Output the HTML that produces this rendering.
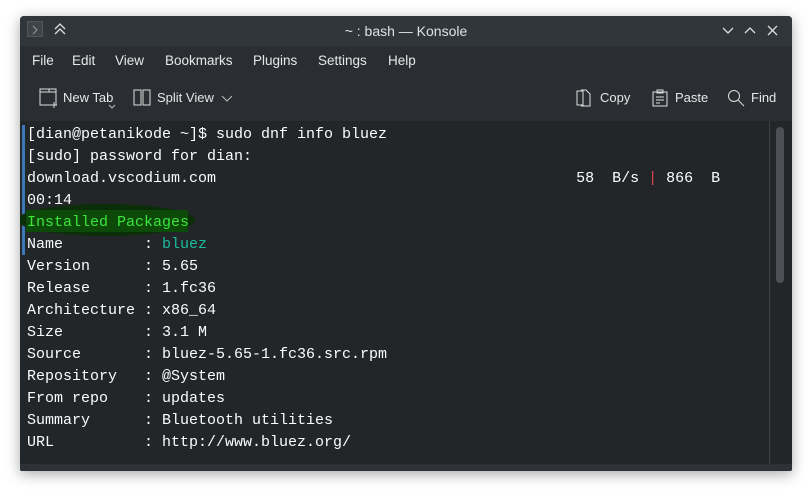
<!DOCTYPE html>
<html><head><meta charset="utf-8"><style>
*{margin:0;padding:0;box-sizing:border-box}
body{width:812px;height:495px;background:#fff;position:relative;overflow:hidden;font-family:"Liberation Sans",sans-serif}
.win{position:absolute;left:20px;top:16px;width:772px;height:455px;background:#2a2e32;border-radius:4px 4px 2px 2px;box-shadow:0 3px 14px rgba(0,0,0,.35);overflow:hidden}
.title{height:30px;background:#31363b;color:#dfe1e3;font-size:14px;position:relative}
.title .t{position:absolute;left:0;right:0;text-align:center;top:7px}
.menu{position:absolute;top:30px;left:0;right:0;height:30px;color:#e6e7e8;font-size:13.5px}
.menu span{position:absolute;top:7px;white-space:nowrap}
.tb{position:absolute;top:68px;height:28px;color:#e6e7e8;font-size:13px;white-space:nowrap}
.tb span{position:absolute;top:6px;white-space:nowrap}
.term{position:absolute;left:0;top:105px;width:772px;height:343px;background:#232629}
.txt{position:absolute;left:7px;top:3px;font-family:"Liberation Mono",monospace;font-size:15px;line-height:22px;color:#fcfcfc;white-space:pre}
.sb{position:absolute;left:749px;top:0;width:1px;height:343px;background:#3d4146}
.thumb{position:absolute;left:756px;top:6px;width:8px;height:156px;border-radius:4px;background:#4d5156}
.bar{position:absolute;left:2px;top:4px;width:3px;height:130px;background:#3a78b8}
.bottom{position:absolute;left:0;top:448px;width:772px;height:7px;background:#2e3238}
</style></head><body>
<div class="win">
<div class="title">
<div style="position:absolute;left:7px;top:5px;width:16px;height:16px;background:#3f4449;border:1px solid #555"></div>
<svg style="position:absolute;left:11px;top:9px" width="8" height="10"><path d="M2 1l4 4-4 4" stroke="#999" fill="none"/></svg>
<svg style="position:absolute;left:33px;top:6px" width="14" height="14"><path d="M2 7l5-5 5 5M2 12l5-5 5 5" stroke="#ddd" fill="none" stroke-width="1.3"/></svg>
<div class="t">~ : bash — Konsole</div>
<svg style="position:absolute;left:700px;top:8px" width="60" height="14"><path d="M3 4l5 5 5-5M25 9l5-5 5 5M48 2l9 9M57 2l-9 9" stroke="#ddd" fill="none" stroke-width="1.3"/></svg>
</div>
<div class="menu"><span style="left:12px">File</span><span style="left:52px">Edit</span><span style="left:95px">View</span><span style="left:145px">Bookmarks</span><span style="left:233px">Plugins</span><span style="left:298px">Settings</span><span style="left:368px">Help</span></div>
<svg style="position:absolute;left:19px;top:72px" width="22" height="22"><path d="M1 1h16v16H1z M1 4h16 M10 1v3" stroke="#ddd" fill="none"/><path d="M15 14v6M12 17h6" stroke="#ddd"/></svg>
<div class="tb" style="left:43px"><span>New Tab</span></div>
<svg style="position:absolute;left:88px;top:88px" width="8" height="6"><path d="M1 1l3 3 3-3" stroke="#bbb" fill="none"/></svg>
<svg style="position:absolute;left:113px;top:73px" width="18" height="17"><path d="M1 1h7v15H1z M10 1h7v15h-7z" stroke="#ddd" fill="none"/></svg>
<div class="tb" style="left:137px"><span>Split View</span></div>
<svg style="position:absolute;left:201px;top:79px" width="12" height="8"><path d="M1 1l5 5 5-5" stroke="#bbb" fill="none"/></svg>
<svg style="position:absolute;left:556px;top:73px" width="16" height="18"><path d="M1 2h6v14H1z M5 1h5l4 4v12H5" stroke="#ddd" fill="none"/></svg>
<div class="tb" style="left:580px"><span>Copy</span></div>
<svg style="position:absolute;left:632px;top:73px" width="16" height="18"><path d="M1 3h14v14H1z M5 1h6v3H5z M4 8h8M4 11h8M4 14h4" stroke="#ddd" fill="none"/></svg>
<div class="tb" style="left:655px"><span>Paste</span></div>
<svg style="position:absolute;left:707px;top:73px" width="18" height="18"><circle cx="7" cy="7" r="5.5" stroke="#ddd" fill="none"/><path d="M11 11l6 6" stroke="#ddd"/></svg>
<div class="tb" style="left:731px"><span>Find</span></div>
<div class="term">
<div class="bar"></div>
<svg style="position:absolute;left:-4px;top:82px" width="185" height="34"><ellipse cx="90" cy="17" rx="89" ry="16" fill="#0a2e07"/></svg>
<div style="position:absolute;left:6px;top:89px;width:162px;height:22px;background:#0d4a0a"></div>
<div class="txt">[dian@petanikode ~]$ sudo dnf info bluez
[sudo] password for dian:
download.vscodium.com                                        58  B/s <span style="color:#da4453">|</span> 866  B
00:14
<span style="color:#3ce43c">Installed Packages</span>
Name         : <span style="color:#1abc9c">bluez</span>
Version      : 5.65
Release      : 1.fc36
Architecture : x86_64
Size         : 3.1 M
Source       : bluez-5.65-1.fc36.src.rpm
Repository   : @System
From repo    : updates
Summary      : Bluetooth utilities
URL          : http://www.bluez.org/</div>
<div class="sb"></div><div class="thumb"></div>
</div>
<div class="bottom"></div>
</div>
</body></html>
